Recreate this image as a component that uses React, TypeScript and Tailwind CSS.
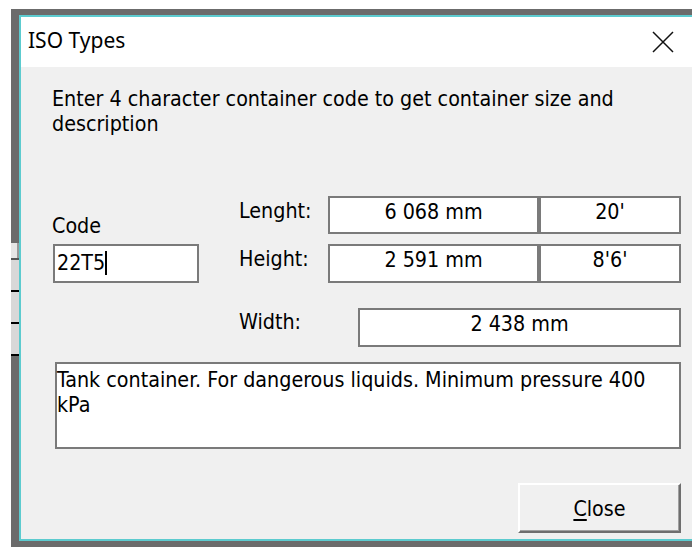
const sunken = "border-2 border-[#7a7a7a] bg-white";

const ValueBox = ({ value, className }: { value: string; className: string }) => (
  <div className={`${sunken} ${className} pt-[1px] text-center leading-[25px]`}>{value}</div>
);

// background window peeking out on the left edge
const EdgeStrip = () => (
  <div className="w-[8px] flex flex-col">
    <div className="h-[228px]" />
    <div className="h-[15px] bg-[#e6e6e6] border-r-2 border-[#9a9a9a]" />
    <div className="h-[2px] bg-[#555]" />
    <div className="h-[30px] bg-[#d8d8d8]" />
    <div className="h-[2px] bg-black" />
    <div className="h-[30px] bg-[#d8d8d8]" />
    <div className="h-[2px] bg-black" />
    <div className="h-[30px] bg-[#d8d8d8]" />
    <div className="h-[2px] bg-black" />
    <div className="flex-1" />
  </div>
);

const CloseGlyph = () => (
  <svg width="22" height="22" viewBox="0 0 22 22" className="mt-[3px]">
    <path d="M1 1L21 21M21 1L1 21" stroke="#111" strokeWidth="1.5" />
  </svg>
);

export default function App() {
  return (
    <div className="w-[692px] h-[547px] bg-white pl-[11px] pt-[9px] flex overflow-hidden text-black font-['DejaVu_Sans_Condensed','DejaVu_Sans',sans-serif] font-stretch-condensed text-[21.3px]">
      <div className="flex-1 bg-[#6b6b6b] pt-[6px] pb-[6px] flex">
        <EdgeStrip />
        <div className="flex-1 border-2 border-r-0 border-[#5ccbcf] flex flex-col">
          <div className="h-[50px] bg-white flex items-center pb-[4px] pl-[7px] pr-[18px]">
            <span className="flex-1 font-['Noto_Sans',sans-serif] font-stretch-normal text-[21px] leading-[28px]">
              ISO Types
            </span>
            <CloseGlyph />
          </div>

          <div className="flex-1 bg-[#f0f0f0] pl-[31px] pr-[11px] flex flex-col">
            <p className="mt-[19px] leading-[25px]">
              Enter 4 character container code to get container size and
              <br />
              description
            </p>

            <div className="mt-[60px] flex">
              <div className="w-[187px] pt-[17px] flex flex-col">
                <span className="leading-[25px]">Code</span>
                <div className={`${sunken} mt-[6px] ml-[1px] w-[146px] h-[39px] pl-[2px] pt-[4px] leading-[25px] flex items-start`}>
                  <span>22T5</span>
                  <span className="w-[2px] h-[24px] bg-black mt-[1px]" />
                </div>
              </div>

              <div className="flex flex-col">
                <div className="flex">
                  <span className="w-[89px] pt-[2px] leading-[25px]">Lenght:</span>
                  <ValueBox value="6 068 mm" className="w-[211px] h-[38px]" />
                  <ValueBox value="20'" className="w-[142px] h-[38px]" />
                </div>
                <div className="flex mt-[10px]">
                  <span className="w-[89px] pt-[2px] leading-[25px]">Height:</span>
                  <ValueBox value="2 591 mm" className="w-[211px] h-[39px]" />
                  <ValueBox value="8'6'" className="w-[142px] h-[39px]" />
                </div>
                <div className="flex mt-[25px]">
                  <span className="w-[119px] pt-[1px] leading-[25px]">Width:</span>
                  <ValueBox value="2 438 mm" className="w-[323px] h-[39px]" />
                </div>
              </div>
            </div>

            <div className={`${sunken} mt-[15px] ml-[3px] h-[87px] pt-[3px] leading-[25px]`}>
              Tank container. For dangerous liquids. Minimum pressure 400
              <br />
              kPa
            </div>

            <button className="self-end mt-[34px] w-[163px] h-[50px] bg-[#f0f0f0] border-2 border-t-white border-l-white border-r-[#6e6e6e] border-b-[#6e6e6e] shadow-[inset_-1px_-1px_0_#a0a0a0] leading-[25px] flex items-center justify-center">
              <span>
                <span className="underline decoration-2 underline-offset-[3px]">C</span>lose
              </span>
            </button>
          </div>
        </div>
      </div>
    </div>
  );
}
